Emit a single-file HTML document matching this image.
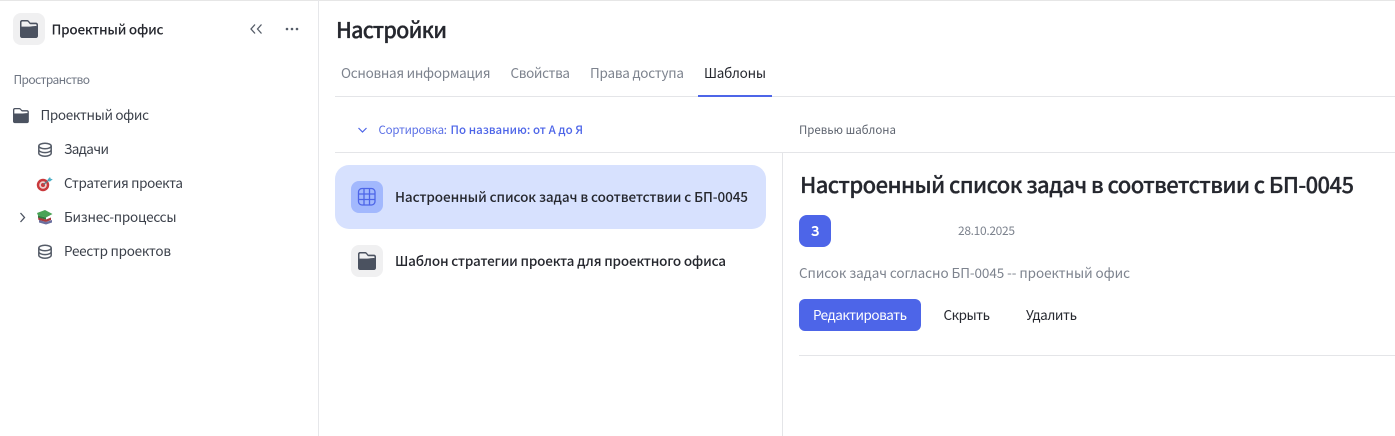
<!DOCTYPE html>
<html lang="ru"><head><meta charset="utf-8"><title>Настройки</title>
<style>
html,body{margin:0;padding:0;width:1395px;height:436px;overflow:hidden;background:#fff}
svg{display:block}
text{font-family:"Noto Sans CJK SC","Liberation Sans",sans-serif;fill:#25272e;white-space:pre}
.g{fill:#7d838e}
.h{stroke:#25272e;stroke-width:.25px}
</style></head><body>
<svg xmlns="http://www.w3.org/2000/svg" width="1395" height="436" viewBox="0 0 1395 436">
<defs>
<g id="folder"><path d="M2 0H7c.8 0 1.400.3 1.900.9L10.300 2.600H16c1.100 0 2 .9 2 2V16c0 1.100-.9 2-2 2H2c-1.100 0-2-.9-2-2V2C0 .9.900 0 2 0z" fill="#4b5260"/><path d="M1.500 2.400C1.500 1.800 1.900 1.500 2.400 1.500H7c.5 0 .9.2 1.200.6l1.200 1.500c.3.4.700.6 1.200.6H15.700c.5 0 .8.3.8.8V6.100C14 5.800 12 6.600 9 6.600H1.500z" fill="currentColor"/></g>
<g id="db" fill="none" stroke="#555c68" stroke-width="1.500"><ellipse cx="7" cy="3.500" rx="6.200" ry="2.800"/><path d="M.8 3.500V10.800C.8 12.400 3.600 13.700 7 13.700S13.200 12.400 13.200 10.800V3.500M.8 7.200C.8 8.800 3.600 10.100 7 10.100S13.200 8.800 13.200 7.200"/></g>
</defs>
<rect width="1395" height="1" fill="#e6e6e6"/>
<rect x="318" y="0" width="1" height="436" fill="#e6e7ea"/>

<rect x="13" y="13" width="32" height="32" rx="8" fill="#f0f0f1"/>
<use href="#folder" x="20" y="20" color="#f0f0f1"/>
<text x="51.500" y="34.500" font-size="13.500" font-weight="500" textLength="112">Проектный офис</text>
<path d="M255 24.500L251 29L255 33.500M261.500 24.500L257.500 29L261.500 33.500" fill="none" stroke="#555c68" stroke-width="1.300"/>
<g fill="#555c68"><circle cx="287" cy="29" r="1.300"/><circle cx="292" cy="29" r="1.300"/><circle cx="297" cy="29" r="1.300"/></g>

<text x="13.500" y="84" font-size="12" style="fill:#6f7683" textLength="76.500">Пространство</text>
<use href="#folder" transform="translate(13 108) scale(.88 .84)" color="#fff"/>
<text x="40.500" y="120" font-size="13.500" style="fill:#3b404a" textLength="108.500">Проектный офис</text>

<use href="#db" x="38" y="142.500"/>
<text x="64" y="154" font-size="13.500" style="fill:#3b404a" textLength="45">Задачи</text>

<g><circle cx="43" cy="185" r="6.200" fill="#c9393c"/><circle cx="43" cy="185" r="3.800" fill="#eccfcd"/><circle cx="43" cy="185" r="2" fill="#c9393c"/><path d="M43.500 184.500L49 180" stroke="#5d7c86" stroke-width="1.200"/><path d="M47.500 179.500L50 177L50.700 178.800L52.800 179.300L49.700 181.700z" fill="#4fb0c6"/></g>
<text x="64" y="188" font-size="13.500" style="fill:#3b404a" textLength="119">Стратегия проекта</text>

<path d="M20.500 213L24.500 217.500L20.500 222" fill="none" stroke="#4b5260" stroke-width="1.300"/>
<g><path d="M37 213L45 210L52.500 214L46 217.500L38 215.500z" fill="#4aa356"/><path d="M38 215.500L46 217.500L46 219.500L38 218z" fill="#2f7d3e"/><path d="M38 217.500L46 219.500L51 217.500V220L46 222L38.500 220z" fill="#a83a3e"/><path d="M39 220L46 222L52 220V222.500L46 224.500L39 222.500z" fill="#6a6f9e"/></g>
<text x="64" y="222" font-size="13.500" style="fill:#3b404a" textLength="112.500">Бизнес-процессы</text>

<use href="#db" x="38" y="244.500"/>
<text x="64" y="256" font-size="13.500" style="fill:#3b404a" textLength="107">Реестр проектов</text>

<text x="336" y="38" font-size="21.500" font-weight="500" class="h" textLength="111">Настройки</text>
<text x="341" y="78" font-size="13.500" class="g" textLength="149.500">Основная информация</text>
<text x="510.500" y="78" font-size="13.500" class="g" textLength="59.500">Свойства</text>
<text x="590" y="78" font-size="13.500" class="g" textLength="94">Права доступа</text>
<text x="704" y="78" font-size="13.500" style="fill:#25272e" textLength="62">Шаблоны</text>
<rect x="335" y="96" width="1060" height="1" fill="#e4e5e8"/>
<rect x="698" y="95" width="74" height="2" fill="#4d65e8"/>

<path d="M358.500 128L362.500 132L366.500 128" fill="none" stroke="#4d65e8" stroke-width="1.200"/>
<text x="378.500" y="134" font-size="11.500" style="fill:#5a6fe6" textLength="68.500">Сортировка:</text>
<text x="450.500" y="134" font-size="11.500" font-weight="500" style="fill:#4d65e8" textLength="132.500">По названию: от А до Я</text>
<text x="799" y="134" font-size="11.500" style="fill:#5f6570" textLength="97">Превью шаблона</text>
<rect x="335" y="152" width="1060" height="1" fill="#e4e5e8"/>
<rect x="782" y="153" width="1" height="283" fill="#e4e5e8"/>

<rect x="335" y="165" width="431" height="64" rx="14" fill="#d7e1fe"/>
<rect x="351" y="181" width="32" height="32" rx="8" fill="#a2b8fd"/>
<g fill="none" stroke="#4d65e8" stroke-width="1.300"><rect x="358.500" y="188.500" width="16.500" height="16.500" rx="3.500"/><path d="M364 188.500V205M369.500 188.500V205M358.500 194H375M358.500 199.500H375"/></g>
<text x="395" y="202" font-size="13.500" font-weight="500" textLength="353">Настроенный список задач в соответствии с БП-0045</text>

<rect x="351" y="245" width="32" height="32" rx="8" fill="#f0f0f1"/>
<use href="#folder" x="358" y="252" color="#f0f0f1"/>
<text x="395" y="266" font-size="13.500" font-weight="500" textLength="331">Шаблон стратегии проекта для проектного офиса</text>

<text x="800" y="193" font-size="22" font-weight="500" class="h" textLength="554">Настроенный список задач в соответствии с БП-0045</text>
<rect x="799" y="215" width="32" height="32" rx="8" fill="#4d65e8"/>
<text x="815" y="236" font-size="13.500" font-weight="700" text-anchor="middle" style="fill:#fff">З</text>
<text x="958" y="235" font-size="12" class="g" textLength="57">28.10.2025</text>
<text x="799" y="278" font-size="13.500" class="g" textLength="331">Список задач согласно БП-0045 -- проектный офис</text>

<rect x="799" y="299" width="122" height="32" rx="6" fill="#4d65e8"/>
<text x="813" y="320" font-size="13.500" style="fill:#fff" textLength="94">Редактировать</text>
<text x="943.500" y="320" font-size="13.500" textLength="46.500">Скрыть</text>
<text x="1026" y="320" font-size="13.500" textLength="51">Удалить</text>
<rect x="799" y="355" width="596" height="1" fill="#e4e5e8"/>
</svg>
</body></html>
